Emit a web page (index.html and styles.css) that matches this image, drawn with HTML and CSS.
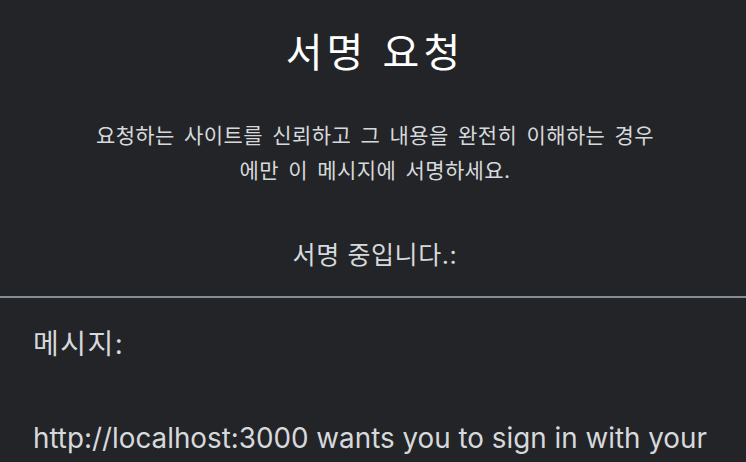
FILE: index.html
```html
<!DOCTYPE html>
<html lang="ko">
<head>
    <meta charset="UTF-8">
    <meta name="viewport" content="width=device-width, initial-scale=1.0">
    <title>서명 요청</title>
    <link rel="stylesheet" href="styles.css">
</head>
<body>
    <div class="signature-request">
        <div class="request-header">
            <h1 class="request-title">서명 요청</h1>
            <p class="request-notice">요청하는 사이트를 신뢰하고 그 내용을 완전히 이해하는 경우에만 이 메시지에 서명하세요.</p>
            <p class="request-status">서명 중입니다.:</p>
        </div>
        <div class="message-section">
            <div class="message-label">메시지:</div>
            <div class="message-body">http://localhost:3000 wants you to sign in with your Ethereum account:</div>
        </div>
    </div>
</body>
</html>
```

FILE: styles.css
```css
body {
    margin: 0;
    padding: 0;
    background: #232427;
    color: #d6d9dc;
    font-family: 'Inter', 'Noto Sans CJK KR', sans-serif;
    overflow: hidden;
}
.signature-request {
    display: flex;
    flex-direction: column;
}
.request-header {
    display: flex;
    flex-direction: column;
    align-items: center;
    text-align: center;
    padding: 28px 0 24px 4px;
    border-bottom: 2px solid #848c96;
}
.request-title {
    margin: 0;
    color: #fff;
    font-size: 40px;
    font-weight: 400;
    letter-spacing: 4px;
    line-height: 50px;
}
.request-notice {
    margin: 40px 0 0;
    width: 568px;
    font-size: 21px;
    letter-spacing: 0.4px;
    word-spacing: 3px;
    line-height: 35px;
}
.request-status {
    margin: 50px 0 0;
    font-size: 25px;
    letter-spacing: 0.6px;
    line-height: 34px;
}
.message-section {
    padding: 28px 33px 0;
}
.message-label {
    font-size: 28px;
    letter-spacing: 1.5px;
    line-height: 36px;
}
.message-body {
    margin-top: 58px;
    font-size: 27.8px;
    line-height: 36px;
}
```
